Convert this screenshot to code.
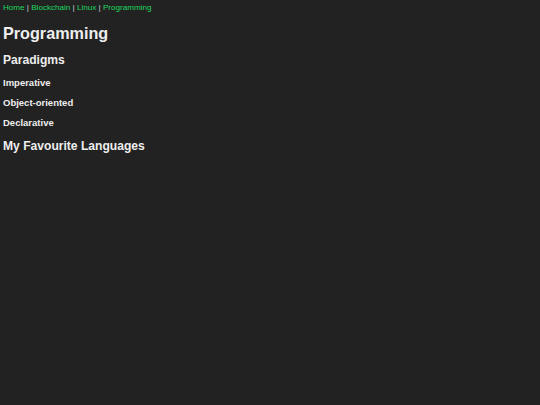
export default function App() {
  return (
    <div className="min-h-[405px] bg-[#222222] text-[#eeeeee] px-[3px] pt-[3px] font-['Liberation_Sans',Arial,sans-serif]">
      <nav className="text-[8.1px] leading-[9px] text-[#cccccc]">
        <a className="text-[#1ed760]">Home</a> | <a className="text-[#1ed760]">Blockchain</a> | <a className="text-[#1ed760]">Linux</a> | <a className="text-[#1ed760]">Programming</a>
      </nav>
      <h1 className="text-[16.2px] leading-[18px] font-bold mt-[12px] mb-[11px]">Programming</h1>
      <h2 className="text-[12.1px] leading-[14px] font-bold mb-[10px]">Paradigms</h2>
      <h3 className="text-[9.5px] leading-[11px] font-bold mb-[9px]">Imperative</h3>
      <h3 className="text-[9.5px] leading-[11px] font-bold mb-[9px]">Object-oriented</h3>
      <h3 className="text-[9.5px] leading-[11px] font-bold mb-[11px]">Declarative</h3>
      <h2 className="text-[12.1px] leading-[14px] font-bold">My Favourite Languages</h2>
    </div>
  );
}
